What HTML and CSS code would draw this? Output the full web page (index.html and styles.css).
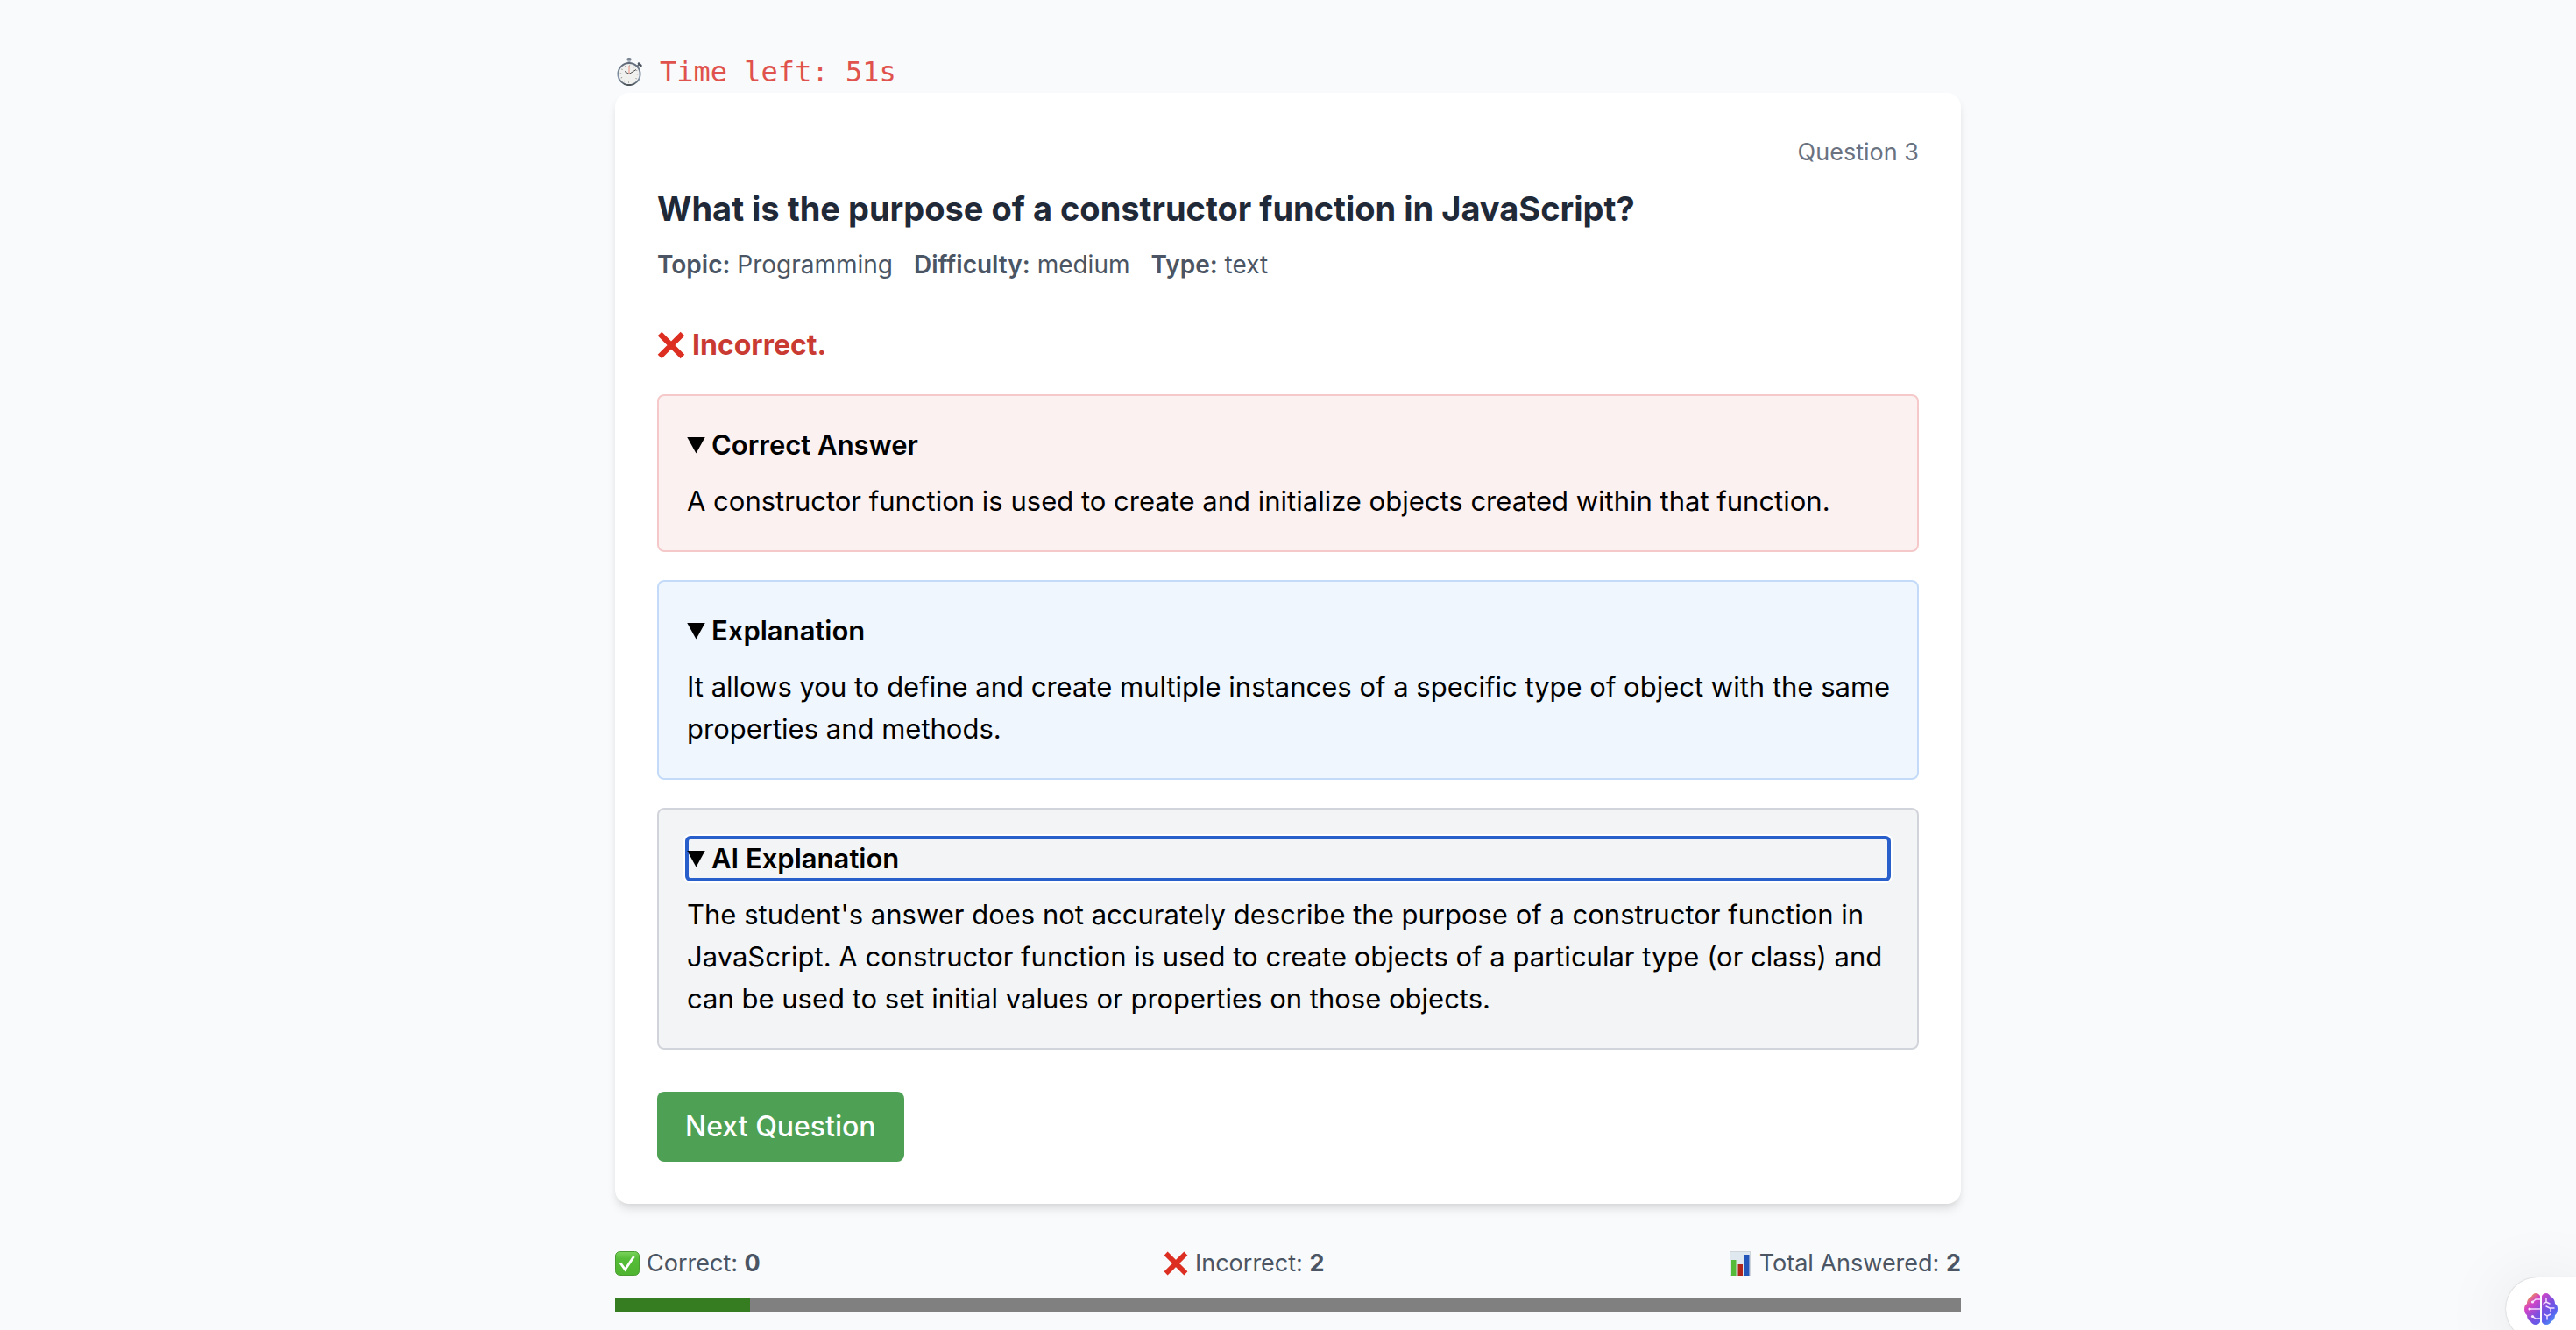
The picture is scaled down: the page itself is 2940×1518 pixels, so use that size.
FILE: index.html
```html
<!DOCTYPE html>
<html lang="en">
<head>
<meta charset="utf-8">
<title>Quiz</title>
<link rel="stylesheet" href="styles.css">
</head>
<body>
<main class="quiz">
  <div class="timer" role="timer">
    <svg class="timer-icon" viewBox="0 0 32 32" aria-hidden="true">
      <defs>
        <linearGradient id="rim" x1="0" y1="0" x2="0" y2="1"><stop offset="0" stop-color="#606a78"/><stop offset=".7" stop-color="#8798ad"/><stop offset="1" stop-color="#4b5359"/></linearGradient>
      </defs>
      <rect x="13.500" y="0" width="5" height="3.500" rx="1.500" fill="#7c8795"/>
      <rect x="14.500" y="3" width="3" height="3" fill="#a5afbb"/>
      <path d="M25 10l3-3" stroke="#66717f" stroke-width="2"/>
      <path d="M27 6.500l2.500 2.500" stroke="#4c5561" stroke-width="2.500" stroke-linecap="round"/>
      <circle cx="16" cy="18.500" r="12.600" fill="#f0f0ef" stroke="url(#rim)" stroke-width="2"/>
      <circle cx="16" cy="18.500" r="9.600" fill="none" stroke="#8c8c8c" stroke-width="1.500" stroke-dasharray=".8 4.227"/>
      <path d="M16 9v10" stroke="#f0a08c" stroke-width="1.200"/>
      <path d="M11 15.500l5 3 8-5" stroke="#4a4a4a" stroke-width="1" fill="none"/>
    </svg>
    <span>Time left: 51s</span>
  </div>

  <section class="card">
    <p class="count">Question 3</p>
    <h1 class="question">What is the purpose of a constructor function in JavaScript?</h1>
    <p class="meta">
      <span><strong>Topic:</strong> Programming</span>
      <span><strong>Difficulty:</strong> medium</span>
      <span><strong>Type:</strong> text</span>
    </p>
    <p class="verdict">
      <svg class="verdict-icon" viewBox="0 0 32 32" aria-hidden="true"><path d="M3 3L29 29M29 3L3 29" stroke="#dc2f21" stroke-width="6.500"/></svg>
      <span>Incorrect.</span>
    </p>

    <div class="notes">
      <details class="note note-answer" open>
        <summary>Correct Answer</summary>
        <p>A constructor function is used to create and initialize objects created within that function.</p>
      </details>
      <details class="note note-explanation" open>
        <summary>Explanation</summary>
        <p>It allows you to define and create multiple instances of a specific type of object with the same properties and methods.</p>
      </details>
      <details class="note note-ai" open>
        <summary class="focused">AI Explanation</summary>
        <p>The student's answer does not accurately describe the purpose of a constructor function in JavaScript. A constructor function is used to create objects of a particular type (or class) and can be used to set initial values or properties on those objects.</p>
      </details>
    </div>

    <button class="next" type="button">Next Question</button>
  </section>

  <div class="stats">
    <span class="stat">
      <svg class="stat-icon" viewBox="0 0 28 28" aria-hidden="true">
        <defs><linearGradient id="tick" x1="0" y1="0" x2="0" y2="1"><stop offset="0" stop-color="#7ad45c"/><stop offset=".3" stop-color="#56bd38"/><stop offset="1" stop-color="#4fb42f"/></linearGradient></defs>
        <rect x=".5" y=".5" width="27" height="27" rx="5" fill="url(#tick)" stroke="#4a9c33"/>
        <path d="M6 13.500l5.500 7.500L21.500 6" fill="none" stroke="#fff" stroke-width="2.800"/>
      </svg>
      <span>Correct: <strong>0</strong></span>
    </span>
    <span class="stat">
      <svg class="stat-icon" viewBox="0 0 32 32" aria-hidden="true"><path d="M3 3L29 29M29 3L3 29" stroke="#dc2f21" stroke-width="6.500"/></svg>
      <span>Incorrect: <strong>2</strong></span>
    </span>
    <span class="stat">
      <svg class="stat-icon" viewBox="0 0 28 28" aria-hidden="true">
        <rect x="2.500" y=".5" width="23" height="27" fill="#dfe7ef" stroke="#cfd5da"/>
        <rect x="4" y="10" width="5.500" height="18" fill="#55b93a"/>
        <rect x="11.500" y="15" width="5.500" height="13" fill="#b0261c"/>
        <rect x="19" y="4" width="5.500" height="24" fill="#2455b8"/>
      </svg>
      <span>Total Answered: <strong>2</strong></span>
    </span>
  </div>
  <div class="progress" role="progressbar" aria-label="Quiz progress" aria-valuemin="0" aria-valuemax="100" aria-valuenow="10"><div class="progress-fill" style="width: 10%"></div></div>
</main>

<button class="assistant" type="button" aria-label="Open assistant">
  <svg class="assistant-icon" viewBox="0 0 38 36" aria-hidden="true">
    <defs><linearGradient id="brain" x1="0" y1="0" x2="1" y2="1"><stop offset=".08" stop-color="#eda43a"/><stop offset=".27" stop-color="#d744c4"/><stop offset=".55" stop-color="#7b50e0"/><stop offset=".75" stop-color="#5a62ee"/><stop offset=".95" stop-color="#4ca6f7"/></linearGradient></defs>
    <path fill="url(#brain)" d="M18 3v30c-1 2-3 3-5 3-3 0-5-2-6-4-3-1-4-4-4-7-2-1-3-4-3-7s1-5 3-6c0-4 2-7 5-8 1-2 3-4 5-4s4 1 5 3zM20 3v30c1 2 3 3 5 3 3 0 5-2 6-4 3-1 4-4 4-7 2-1 3-4 3-7s-1-5-3-6c0-4-2-7-5-8-1-2-3-4-5-4s-4 1-5 3z"/>
    <g fill="none" stroke="#f3dcff" stroke-width="1.500" stroke-linecap="round">
      <path d="M18 7h-5L9.500 10M18 18H6M18 29h-5L9.500 26.500M25 6v4l-3 2M25 10l4 2M25 15l4 2h5M30 17v4M26 30v-4l-3-2M26 26l4-2"/>
    </g>
    <g fill="#f8e8ff"><circle cx="9.500" cy="10" r="1.600"/><circle cx="6" cy="18" r="1.600"/><circle cx="9.500" cy="26.500" r="1.600"/></g>
  </svg>
</button>
</body>
</html>
```
FILE: styles.css
```css
* { box-sizing: border-box; }

body {
  margin: 0;
  background: #f9fafb;
  color: #000;
  font-family: Inter, "Liberation Sans", sans-serif;
  font-size: 31px;
  line-height: 48px;
  overflow: hidden;
}

h1, p { margin: 0; }

.quiz {
  max-width: 1536px;
  margin: 0 auto;
  padding-top: 58px;
}

.timer {
  display: flex;
  align-items: center;
  gap: 19px;
  color: #e0524d;
  font-family: "DejaVu Sans Mono", monospace;
  font-size: 32px;
}
.timer-icon { width: 32px; height: 32px; }

.card {
  padding: 48px;
  border-radius: 16px;
  background: #fff;
  box-shadow: 0 8px 12px -2px rgba(0, 0, 0, .1), 0 4px 8px -4px rgba(0, 0, 0, .1);
}

.count {
  color: #6b7280;
  font-size: 27px;
  line-height: 40px;
  text-align: right;
}

.question {
  margin: 16px 0;
  color: #1f2937;
  font-size: 38px;
  font-weight: 700;
  line-height: 56px;
}

.meta {
  display: flex;
  gap: 24px;
  color: #4b5563;
  font-size: 28px;
  line-height: 40px;
}
.meta strong, .stat strong { font-weight: 600; }
.stat strong { font-weight: 700; }

.verdict {
  display: flex;
  align-items: center;
  gap: 8px;
  margin: 48px 0 32px;
  color: #c93a32;
  font-size: 32px;
  font-weight: 700;
}
.verdict-icon { width: 32px; height: 32px; }

.notes {
  display: flex;
  flex-direction: column;
  gap: 32px;
}

.note {
  padding: 32px;
  border: 2px solid;
  border-radius: 8px;
}
.note p { margin-right: -16px; }
.note-answer { background: #fcf1f1; border-color: #f5c9c9; }
.note-explanation { background: #eff6fe; border-color: #c3dbf8; }
.note-ai { background: #f3f4f6; border-color: #d1d5db; }

.note summary {
  display: flex;
  align-items: center;
  gap: 7px;
  margin-bottom: 16px;
  font-weight: 600;
  list-style: none;
}
.note summary::before {
  content: "";
  width: 21px;
  height: 19px;
  background: #000;
  clip-path: polygon(0 0, 100% 0, 50% 100%);
}
.note .focused {
  border-radius: 4px;
  outline: 4px solid #285fcb;
  outline-offset: -2px;
  box-shadow: 0 0 0 4px #fff;
}

.next {
  display: block;
  margin-top: 48px;
  padding: 16px 32px;
  border: 0;
  border-radius: 8px;
  background: #4ea154;
  color: #fff;
  font: inherit;
  font-size: 32px;
  font-weight: 500;
}

.stats {
  display: flex;
  justify-content: space-between;
  margin-top: 48px;
  color: #4b5563;
  font-size: 27px;
  line-height: 40px;
}
.stat {
  display: flex;
  align-items: center;
  gap: 8px;
}
.stat-icon { width: 28px; height: 28px; }

.progress {
  height: 16px;
  margin-top: 20px;
  background: #808080;
}
.progress-fill {
  height: 100%;
  background: #367d22;
}

.assistant {
  position: fixed;
  right: 0;
  bottom: -12px;
  width: 80px;
  height: 72px;
  padding: 0 0 0 21px;
  border: 0;
  border-radius: 36px 0 0 36px;
  background: #fff;
  box-shadow: 0 0 2px rgba(0, 0, 0, .25), 0 8px 80px rgba(0, 0, 0, .1);
  text-align: left;
}
.assistant-icon {
  display: block;
  width: 38px;
  height: 36px;
}
```
